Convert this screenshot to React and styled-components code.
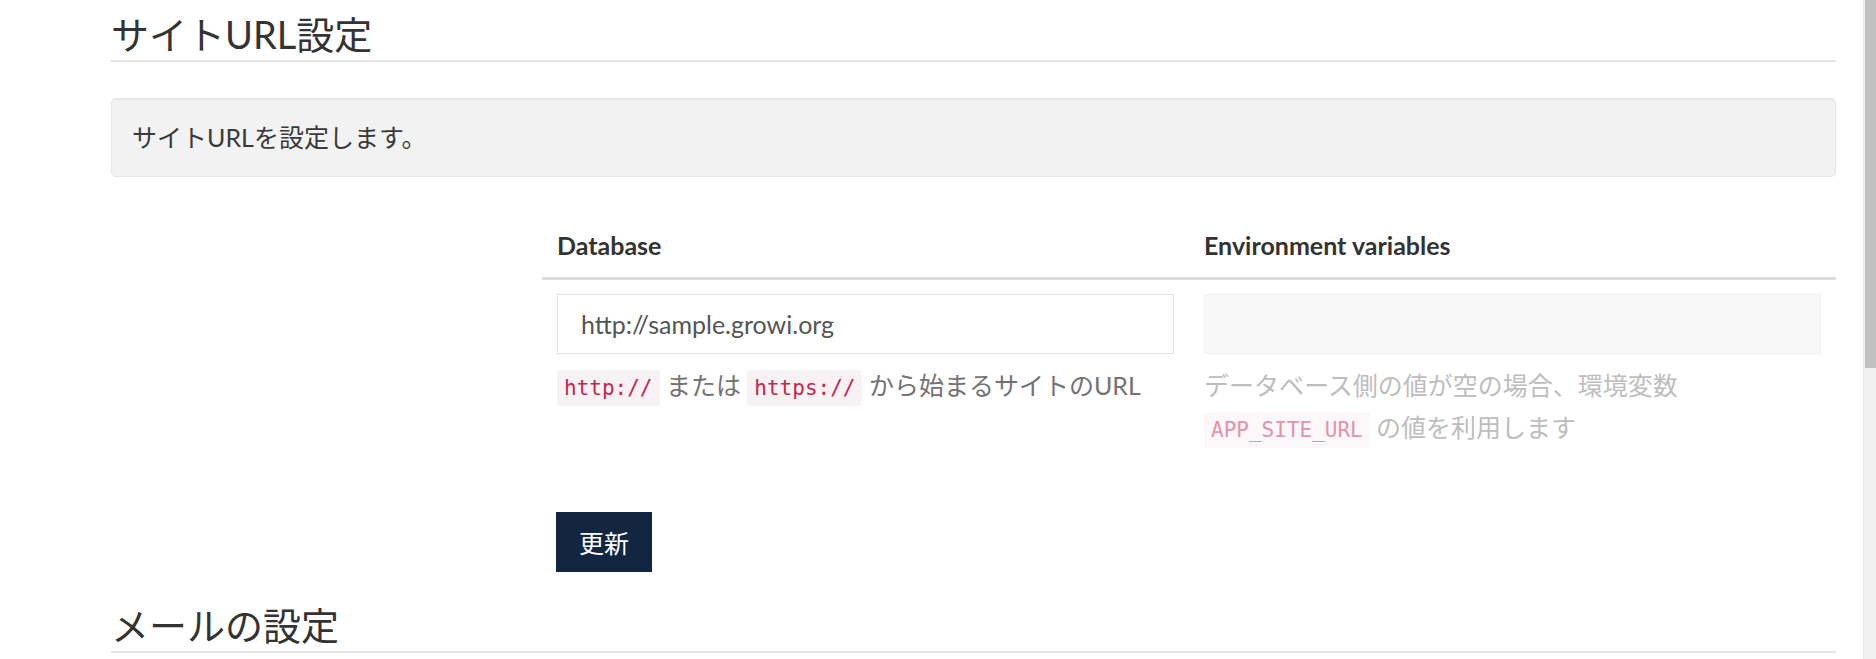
import React from 'react'
import styled, { createGlobalStyle } from 'styled-components'

const GlobalStyle = createGlobalStyle`
  html, body {
    margin: 0;
    padding: 0;
    overflow: hidden;
    background: #fff;
  }
  body {
    font-family: Lato, "Noto Sans CJK JP", sans-serif;
    font-size: 25px;
    line-height: 1.42857;
    color: #333;
  }
`

const Page = styled.div`
  width: 1725px;
  padding-left: 111px;
`

const SectionTitle = styled.h2`
  margin: ${p => p.$top}px 0 0;
  padding-bottom: 3px;
  font-size: 38px;
  font-weight: 400;
  line-height: 46px;
  color: #333;
  border-bottom: 2px solid #e5e5e5;
`

const Well = styled.div`
  margin-top: 36px;
  padding: 20px;
  min-height: 37px;
  background: #f2f2f2;
  border: 1px solid #e6e6e6;
  border-radius: 5px;
  box-shadow: inset 0 1px 1px rgba(0, 0, 0, 0.04);
  color: #3a3a3a;
  line-height: 37px;
`

const FormRow = styled.div`
  display: flex;
  margin-top: 37px;
`

const Spacer = styled.div`
  width: 431px;
  flex: none;
`

const FormCol = styled.div`
  width: 1294px;
  flex: none;
`

const Table = styled.table`
  width: 100%;
  table-layout: fixed;
  border-collapse: collapse;
  border-spacing: 0;
`

const Th = styled.th`
  padding: 14px 15px;
  text-align: left;
  font-weight: 700;
  line-height: 35px;
  color: #333;
  border-bottom: 3px solid #ddd;
`

const Td = styled.td`
  padding: 14px 15px;
  vertical-align: top;
`

const Input = styled.input`
  display: block;
  box-sizing: border-box;
  width: 100%;
  height: 60px;
  margin: 0;
  padding: 0 23px;
  font-family: Lato, "Noto Sans CJK JP", sans-serif;
  font-size: 25px;
  color: #555;
  background: ${p => (p.readOnly ? '#f8f8f8' : '#fff')};
  border: 1px solid ${p => (p.readOnly ? '#f1f1f1' : '#dfe3e7')};
  border-radius: 0;
  outline: none;
`

const Help = styled.div`
  margin: 10px 0 17px;
  line-height: 42px;
  color: ${p => (p.$muted ? '#bdbdbd' : '#737373')};
`

const Code = styled.code`
  padding: 6px 7px;
  font-family: "DejaVu Sans Mono", "Liberation Mono", monospace;
  font-size: 21px;
  color: ${p => (p.$muted ? '#e592aa' : '#c7254e')};
  background: ${p => (p.$muted ? '#fcf8f9' : '#f9f2f4')};
  border-radius: 2px;
`

const Actions = styled.div`
  margin-top: 30px;
  padding-left: 14px;
`

const Button = styled.button`
  height: 60px;
  padding: 0 22px;
  font-family: Lato, "Noto Sans CJK JP", sans-serif;
  font-size: 25px;
  color: #fff;
  background: #132641;
  border: 1px solid #132641;
  border-radius: 0;
`

const ScrollTrack = styled.div`
  position: fixed;
  top: 0;
  right: 0;
  bottom: 0;
  width: 13px;
  background: #f0f0f0;
  border-left: 1px solid #e8e8e8;
  box-sizing: border-box;
`

const ScrollThumb = styled.div`
  margin-left: 1px;
  height: 368px;
  background: #c1c1c1;
`

export default function App() {
  return (
    <>
      <GlobalStyle />
      <Page>
        <SectionTitle $top={11}>サイトURL設定</SectionTitle>
        <Well>サイトURLを設定します。</Well>

        <FormRow>
          <Spacer />
          <FormCol>
            <Table>
              <thead>
                <tr>
                  <Th>Database</Th>
                  <Th>Environment variables</Th>
                </tr>
              </thead>
              <tbody>
                <tr>
                  <Td>
                    <Input type="text" defaultValue="http://sample.growi.org" />
                    <Help>
                      <Code>http://</Code> または <Code>https://</Code> から始まるサイトのURL
                    </Help>
                  </Td>
                  <Td>
                    <Input type="text" readOnly defaultValue="" />
                    <Help $muted>
                      データベース側の値が空の場合、環境変数
                      <br />
                      <Code $muted>APP_SITE_URL</Code> の値を利用します
                    </Help>
                  </Td>
                </tr>
              </tbody>
            </Table>
            <Actions>
              <Button type="button">更新</Button>
            </Actions>
          </FormCol>
        </FormRow>

        <SectionTitle $top={30}>メールの設定</SectionTitle>
      </Page>
      <ScrollTrack>
        <ScrollThumb />
      </ScrollTrack>
    </>
  )
}
